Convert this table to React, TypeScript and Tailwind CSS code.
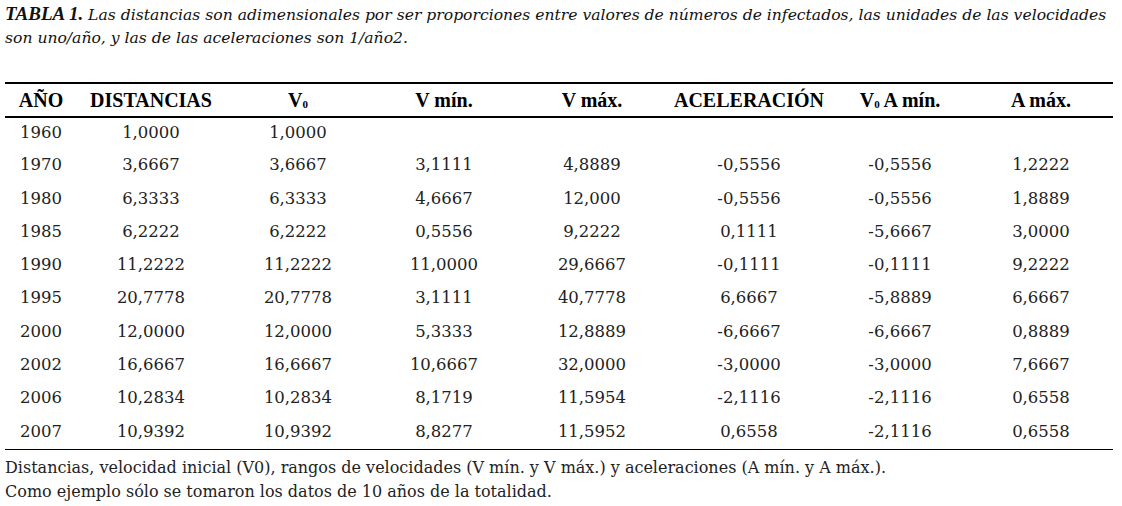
const rows: string[][] = [
  ["1960", "1,0000", "1,0000", "", "", "", "", ""],
  ["1970", "3,6667", "3,6667", "3,1111", "4,8889", "-0,5556", "-0,5556", "1,2222"],
  ["1980", "6,3333", "6,3333", "4,6667", "12,000", "-0,5556", "-0,5556", "1,8889"],
  ["1985", "6,2222", "6,2222", "0,5556", "9,2222", "0,1111", "-5,6667", "3,0000"],
  ["1990", "11,2222", "11,2222", "11,0000", "29,6667", "-0,1111", "-0,1111", "9,2222"],
  ["1995", "20,7778", "20,7778", "3,1111", "40,7778", "6,6667", "-5,8889", "6,6667"],
  ["2000", "12,0000", "12,0000", "5,3333", "12,8889", "-6,6667", "-6,6667", "0,8889"],
  ["2002", "16,6667", "16,6667", "10,6667", "32,0000", "-3,0000", "-3,0000", "7,6667"],
  ["2006", "10,2834", "10,2834", "8,1719", "11,5954", "-2,1116", "-2,1116", "0,6558"],
  ["2007", "10,9392", "10,9392", "8,8277", "11,5952", "0,6558", "-2,1116", "0,6558"],
]

const cols = "grid grid-cols-[72px_148px_146px_146px_150px_164px_138px_144px]"

function V0() {
  return (
    <span>
      V<sub className="text-[11px] relative top-[1px]">0</sub>
    </span>
  )
}

export default function App() {
  return (
    <div className="w-[1122px] h-[506px] bg-white text-[#1a1a1a] overflow-hidden">
      <div className="px-[5px] pt-[2px] font-['DejaVu_Serif',serif] italic text-[15.6px] leading-[23px] text-[#111]">
        <span className="font-bold font-['Liberation_Serif',serif] text-[19px]">TABLA 1.</span>{" "}
        Las distancias son adimensionales por ser proporciones entre valores de números de infectados, las unidades de las velocidades son uno/año, y las de las aceleraciones son 1/año2.
      </div>

      <div className="ml-[5px] w-[1108px] mt-[32px]">
        <div className="h-[2px] bg-black" />
        <div className={`${cols} h-[32px] items-center text-center font-['Liberation_Serif',serif] font-bold text-[20px] text-black`}>
          <div>AÑO</div>
          <div>DISTANCIAS</div>
          <div><V0 /></div>
          <div>V mín.</div>
          <div>V máx.</div>
          <div>ACELERACIÓN</div>
          <div><V0 /> A mín.</div>
          <div>A máx.</div>
        </div>
        <div className="h-[2px] bg-black" />
        <div className="font-['DejaVu_Serif',serif] text-[16.5px] text-[#222]">
          {rows.map((r, i) => (
            <div
              key={r[0]}
              className={`${cols} items-center text-center ${i === 0 ? "h-[31px]" : "h-[33.3px]"}`}
            >
              {r.map((c, j) => (
                <div key={j}>{c}</div>
              ))}
            </div>
          ))}
        </div>
        <div className="h-[1.5px] bg-black" />
      </div>

      <div className="px-[5px] pt-[6px] font-['DejaVu_Serif',serif] text-[16px] leading-[24px] text-[#222]">
        <div>Distancias, velocidad inicial (V0), rangos de velocidades (V mín. y V máx.) y aceleraciones (A mín. y A máx.).</div>
        <div>Como ejemplo sólo se tomaron los datos de 10 años de la totalidad.</div>
      </div>
    </div>
  )
}
